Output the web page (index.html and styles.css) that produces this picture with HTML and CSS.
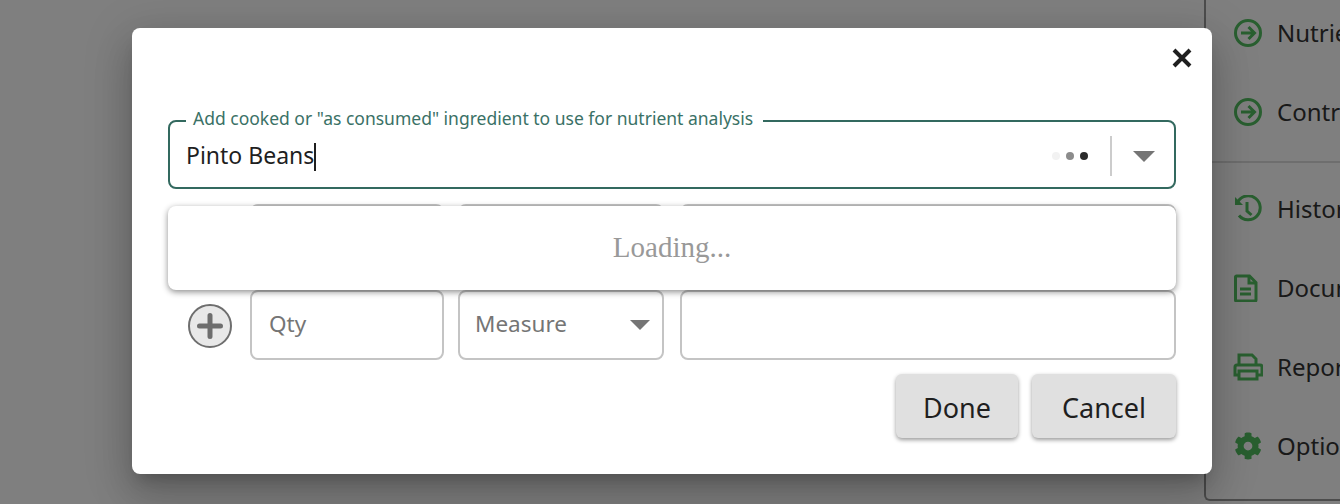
FILE: index.html
```html
<!DOCTYPE html>
<html lang="en">
<head>
  <meta charset="UTF-8" />
  <meta name="viewport" content="width=device-width, initial-scale=1.0"/>
  <title>Add ingredient</title>
  <link rel="stylesheet" href="styles.css">
</head>
<body>
  <div class="page">
    <nav class="drawer">
      <ul class="menu-group first">
        <li class="menu-item">
          <svg class="menu-icon" viewBox="0 0 28 28"><circle cx="14" cy="14" r="12.500"/><path d="M7 14h13M14.500 8l6 6-6 6"/></svg>
          Nutrient Analysis
        </li>
        <li class="menu-item">
          <svg class="menu-icon" viewBox="0 0 28 28"><circle cx="14" cy="14" r="12.500"/><path d="M7 14h13M14.500 8l6 6-6 6"/></svg>
          Contribution
        </li>
      </ul>
      <ul class="menu-group">
        <li class="menu-item">
          <svg class="menu-icon" viewBox="0 0 28 28"><path d="M4 6.500A12 12 0 1 1 5 20.500"/><path d="M1 2v8h8z" class="solid"/><path d="M13 7v9l4.500 4"/></svg>
          History
        </li>
        <li class="menu-item">
          <svg class="menu-icon" viewBox="0 0 28 28"><path d="M1.500 3a1 1 0 0 1 1-1h13l6.500 6.500V26a1 1 0 0 1-1 1h-18.500a1 1 0 0 1-1-1z"/><path d="M15 2v7h7M6 15h11M6 20h11"/></svg>
          Documents
        </li>
        <li class="menu-item">
          <svg class="menu-icon" viewBox="0 0 28 28"><path d="M5 12V2h13l4 4v6M5 22H1v-8a2 2 0 0 1 2-2h23a2 2 0 0 1 2 2v8h-5M5 18h18v8H5z"/></svg>
          Reports
        </li>
        <li class="menu-item">
          <svg class="menu-icon gear" viewBox="0 0 512 512"><path d="M487 316l-42-25a192 192 0 0 0 0-70l42-25c5-3 7-8 5-14-11-35-30-67-54-93-4-4-10-5-15-2l-42 24a188 188 0 0 0-61-35V28c0-6-4-10-9-11-36-8-73-8-107 0-5 1-9 5-9 11v48a194 194 0 0 0-61 35L92 87c-5-3-11-2-15 2-24 26-43 58-54 93-2 6 0 11 5 14l42 25a192 192 0 0 0 0 70l-42 25c-5 3-7 8-5 14 11 35 30 67 54 93 4 4 10 5 15 2l42-24a188 188 0 0 0 61 35v48c0 6 4 10 9 11 36 8 73 8 107 0 5-1 9-5 9-11v-48a194 194 0 0 0 61-35l42 24c5 3 11 2 15-2 24-26 43-58 54-93 2-6 0-11-5-14zM256 336a80 80 0 1 1 0-160 80 80 0 0 1 0 160z"/></svg>
          Options
        </li>
      </ul>
    </nav>
  </div>

  <div class="backdrop"></div>

  <div class="modal">
    <button class="close-btn" aria-label="Close">
      <svg viewBox="0 0 22 22"><path d="M3 3l16 16M19 3L3 19"/></svg>
    </button>

    <fieldset class="search-field">
      <legend>Add cooked or "as consumed" ingredient to use for nutrient analysis</legend>
      <span class="search-value">Pinto Beans<span class="caret"></span></span>
      <span class="dots"><i class="dot d1"></i><i class="dot d2"></i><i class="dot d3"></i></span>
      <span class="search-sep"></span>
      <span class="arrow big"></span>
    </fieldset>

    <div class="dropdown">Loading...</div>

    <div class="ingredient-row">
      <span class="add-slot"></span>
      <div class="box qty"></div>
      <div class="box measure"></div>
      <div class="box desc"></div>
    </div>

    <div class="ingredient-row second">
      <span class="add-slot">
        <svg class="add-btn" viewBox="0 0 44 44"><circle cx="22" cy="22" r="21"/><path d="M11.500 22h21M22 11.500v21"/></svg>
      </span>
      <div class="box qty">Qty</div>
      <div class="box measure">Measure<span class="arrow"></span></div>
      <div class="box desc"></div>
    </div>

    <div class="actions">
      <button class="btn done">Done</button>
      <button class="btn cancel">Cancel</button>
    </div>
  </div>
</body>
</html>
```

FILE: styles.css
```css
* {
  margin: 0;
  padding: 0;
  box-sizing: border-box;
}

body {
  font-family: "Noto Sans", sans-serif;
  background-color: #fff;
  color: #1f1f1f;
  height: 504px;
  overflow: hidden;
}

.page {
  display: flex;
  justify-content: flex-end;
  height: 100%;
}

.drawer {
  width: 136px;
  height: 501px;
  background-color: #fff;
  border-left: 2px solid #999;
  border-bottom: 2px solid #999;
  border-bottom-left-radius: 6px;
  overflow: hidden;
  white-space: nowrap;
  color: #333;
}

.menu-group {
  list-style: none;
  padding-top: 6px;
}

.menu-group.first {
  height: 170px;
  margin-top: -7px;
  padding-top: 0;
  border-bottom: 2px solid #ddd;
}

.menu-item {
  display: flex;
  align-items: center;
  gap: 14px;
  height: 79px;
  padding-left: 27px;
  font-size: 24px;
}

.menu-icon {
  flex: none;
  width: 30px;
  height: 28px;
  fill: none;
  stroke: #52be60;
  stroke-width: 3;
}

.menu-icon .solid {
  fill: #52be60;
  stroke: none;
}

.menu-icon.gear {
  fill: #52be60;
  stroke: none;
}

.backdrop {
  position: absolute;
  inset: 0;
  background-color: rgba(0, 0, 0, 0.5);
}

.modal {
  position: absolute;
  left: 132px;
  top: 28px;
  width: 1080px;
  height: 446px;
  padding: 82px 36px 0;
  background-color: #fff;
  border-radius: 8px;
  box-shadow: 0 11px 15px -7px rgba(0, 0, 0, 0.2), 0 24px 38px 3px rgba(0, 0, 0, 0.14), 0 9px 46px 8px rgba(0, 0, 0, 0.12);
}

.close-btn {
  position: absolute;
  right: 19px;
  top: 19px;
  width: 22px;
  height: 22px;
  border: none;
  background: none;
}

.close-btn svg {
  display: block;
  fill: none;
  stroke: #1f1f1f;
  stroke-width: 4;
}

.search-field {
  display: flex;
  align-items: center;
  height: 79px;
  padding: 0 19px 0 16px;
  border: 2px solid #33695f;
  border-radius: 8px;
}

.search-field legend {
  padding: 0 10px 6px 7px;
  font-size: 17.500px;
  line-height: 16px;
  color: #3a7166;
  white-space: nowrap;
}

.search-value {
  flex: 1;
  font-size: 23px;
  margin-top: -10px;
}

.caret {
  display: inline-block;
  width: 2px;
  height: 28px;
  background-color: #1f1f1f;
  vertical-align: -7px;
}

.dots {
  display: flex;
  gap: 6px;
  margin-top: -8px;
}

.dot {
  width: 8px;
  height: 8px;
  border-radius: 50%;
}

.d1 { background-color: #f2f2f2; }
.d2 { background-color: #8c8c8c; }
.d3 { background-color: #2b2b2b; }

.search-sep {
  width: 2px;
  height: 40px;
  margin: -8px 21px 0 22px;
  background-color: #ccc;
}

.arrow {
  display: block;
  width: 0;
  height: 0;
  border-left: 10px solid transparent;
  border-right: 10px solid transparent;
  border-top: 10px solid #757575;
}

.arrow.big {
  margin-top: -6px;
  border-left-width: 11px;
  border-right-width: 11px;
  border-top-width: 11px;
}

.dropdown {
  position: absolute;
  left: 36px;
  top: 178px;
  width: 1008px;
  height: 84px;
  padding-bottom: 2px;
  z-index: 2;
  display: flex;
  align-items: center;
  justify-content: center;
  background-color: #fff;
  border-radius: 8px;
  box-shadow: 0 2px 6px rgba(0, 0, 0, 0.45);
  font-family: "Liberation Serif", serif;
  font-size: 29px;
  color: #999;
}

.ingredient-row {
  display: flex;
  align-items: center;
  height: 70px;
  margin-top: 15px;
}

.ingredient-row.second {
  margin-top: 16px;
}

.add-slot {
  display: flex;
  justify-content: center;
  width: 82px;
  padding-left: 2px;
}

.add-btn {
  width: 44px;
  height: 44px;
  margin-top: 2px;
  fill: #e8e8e8;
  stroke: #6e6e6e;
  stroke-width: 2;
}

.add-btn path {
  stroke-width: 5;
  stroke-linecap: round;
}

.box {
  display: flex;
  align-items: center;
  height: 70px;
  padding-bottom: 4px;
  border: 2px solid #c4c4c4;
  border-radius: 8px;
  font-size: 22.500px;
  color: #757575;
}

.qty {
  width: 194px;
  margin-right: 14px;
  padding-left: 17px;
}

.measure {
  justify-content: space-between;
  width: 206px;
  margin-right: 16px;
  padding-left: 15px;
  padding-right: 12px;
}

.measure .arrow {
  margin-top: 4px;
}

.desc {
  flex: 1;
}

.actions {
  display: flex;
  justify-content: flex-end;
  gap: 14px;
  margin-top: 14px;
}

.btn {
  height: 64px;
  padding-top: 2px;
  border: none;
  border-radius: 6px;
  background-color: #e0e0e0;
  box-shadow: 0 2px 4px rgba(0, 0, 0, 0.4);
  font-family: inherit;
  font-size: 27px;
  color: #1f1f1f;
}

.done {
  width: 122px;
}

.cancel {
  width: 144px;
}
```
